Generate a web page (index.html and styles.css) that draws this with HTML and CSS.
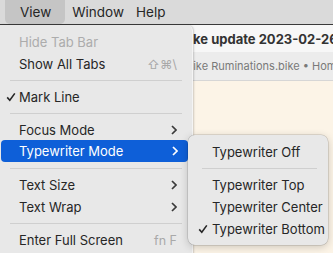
FILE: index.html
```html
<!DOCTYPE html>
<html lang="en">
<head>
    <meta charset="UTF-8">
    <title>View Menu</title>
    <link rel="stylesheet" href="styles.css">
</head>
<body>
    <div class="screen">
        <div class="menubar">
            <span class="menubar-item active">View</span>
            <span class="menubar-item">Window</span>
            <span class="menubar-item">Help</span>
        </div>

        <div class="window">
            <div class="titlebar"><span class="title">Bike update 2023-02-26</span></div>
            <div class="tabbar"><span class="tab">Bike Ruminations.bike • Home</span></div>
            <div class="content"></div>
        </div>

        <!-- View menu -->
        <div class="menu main-menu">
            <div class="item disabled"><span class="label">Hide Tab Bar</span></div>
            <div class="item"><span class="label">Show All Tabs</span><span class="shortcut">⇧⌘\</span></div>
            <div class="sep"></div>
            <div class="item"><svg class="check" viewBox="0 0 10 10"><path d="M1.2 5.4 L3.8 8.2 L8.8 1.4"/></svg><span class="label">Mark Line</span></div>
            <div class="sep"></div>
            <div class="item"><span class="label">Focus Mode</span><svg class="chev" viewBox="0 0 6 10"><path d="M1 1 L5 5 L1 9"/></svg></div>
            <div class="item selected"><span class="label">Typewriter Mode</span><svg class="chev" viewBox="0 0 6 10"><path d="M1 1 L5 5 L1 9"/></svg></div>
            <div class="sep"></div>
            <div class="item"><span class="label">Text Size</span><svg class="chev" viewBox="0 0 6 10"><path d="M1 1 L5 5 L1 9"/></svg></div>
            <div class="item"><span class="label">Text Wrap</span><svg class="chev" viewBox="0 0 6 10"><path d="M1 1 L5 5 L1 9"/></svg></div>
            <div class="sep"></div>
            <div class="item"><span class="label">Enter Full Screen</span><span class="shortcut">fn F</span></div>
        </div>

        <!-- Typewriter submenu -->
        <div class="menu sub-menu">
            <div class="item"><span class="label">Typewriter Off</span></div>
            <div class="sep"></div>
            <div class="item"><span class="label">Typewriter Top</span></div>
            <div class="item"><span class="label">Typewriter Center</span></div>
            <div class="item"><svg class="check" viewBox="0 0 10 10"><path d="M1.2 5.4 L3.8 8.2 L8.8 1.4"/></svg><span class="label">Typewriter Bottom</span></div>
        </div>
    </div>
</body>
</html>
```

FILE: styles.css
```css
body {
    margin: 0;
    font-family: Inter, "Liberation Sans", sans-serif;
    color: #262626;
}
.screen {
    position: relative;
    width: 333px;
    height: 253px;
    overflow: hidden;
    background: #fcf4e7;
}
.menubar {
    height: 24px;
    background: #dadada;
    display: flex;
    align-items: stretch;
    padding-left: 5px;
    font-size: 13.5px;
}
.menubar-item {
    display: flex;
    align-items: center;
    padding: 0 6px;
}
.menubar-item.active {
    background: #c5c5c5;
    border-radius: 0 0 5px 5px;
    padding: 0 14px 0 15px;
    margin-right: 1px;
}
.window {
    border-top: 1px solid #3a3a3a;
}
.titlebar {
    height: 27px;
    background: #f7f7f7;
    display: flex;
    align-items: center;
    padding-left: 181px;
    white-space: nowrap;
    overflow: hidden;
}
.title {
    font-weight: 700;
    font-size: 13px;
    color: #333;
}
.tabbar {
    height: 28px;
    background: #ececec;
    border-bottom: 1px solid #d6d6d6;
    display: flex;
    align-items: center;
    padding-left: 186px;
    white-space: nowrap;
    overflow: hidden;
}
.tab {
    font-size: 11px;
    color: #797979;
}
.content {
    height: 200px;
    background: #fcf4e7;
}
.menu {
    position: absolute;
    background: #e8e8e8;
    font-size: 13px;
}
.main-menu {
    left: 0;
    top: 25px;
    width: 192px;
    height: 240px;
    padding-top: 6px;
    border-right: 1px solid #f4f4f4;
    border-radius: 0 6px 0 0;
    box-shadow: 1px 0 2px rgba(0, 0, 0, 0.18);
}
.sub-menu {
    left: 188px;
    top: 135px;
    width: 140px;
    padding: 6px 0 5px;
    border-radius: 7px;
    box-shadow: 0 0 0 0.5px rgba(0, 0, 0, 0.2), 0 2px 8px rgba(0, 0, 0, 0.2);
}
.item {
    position: relative;
    height: 22px;
    display: flex;
    align-items: center;
    padding: 0 15px 0 19px;
    white-space: nowrap;
}
.sub-menu .item {
    padding-left: 24px;
}
.item .label {
    flex: 1;
}
.item.disabled {
    color: #acacac;
}
.item.selected {
    background: #0e5fd8;
    color: #fff;
    margin: -1px 4px 1px 1px;
    padding-left: 18px;
    padding-right: 10px;
    border-radius: 4px;
}
.shortcut {
    color: #a9a9a9;
    font-size: 12.5px;
}
.check {
    position: absolute;
    left: 6px;
    top: 6px;
    width: 10px;
    height: 10px;
    fill: none;
    stroke: #262626;
    stroke-width: 1.6;
}
.sub-menu .check {
    left: 10px;
}
.chev {
    width: 6px;
    height: 10px;
    fill: none;
    stroke: #3a3a3a;
    stroke-width: 1.7;
}
.selected .chev {
    stroke: #fff;
}
.sep {
    height: 11px;
    display: flex;
    align-items: center;
    padding: 0 10px;
}
.sep::after {
    content: "";
    flex: 1;
    height: 1px;
    background: #cfcfcf;
}
.sub-menu .sep {
    padding: 0 11px 0 14px;
}
```
